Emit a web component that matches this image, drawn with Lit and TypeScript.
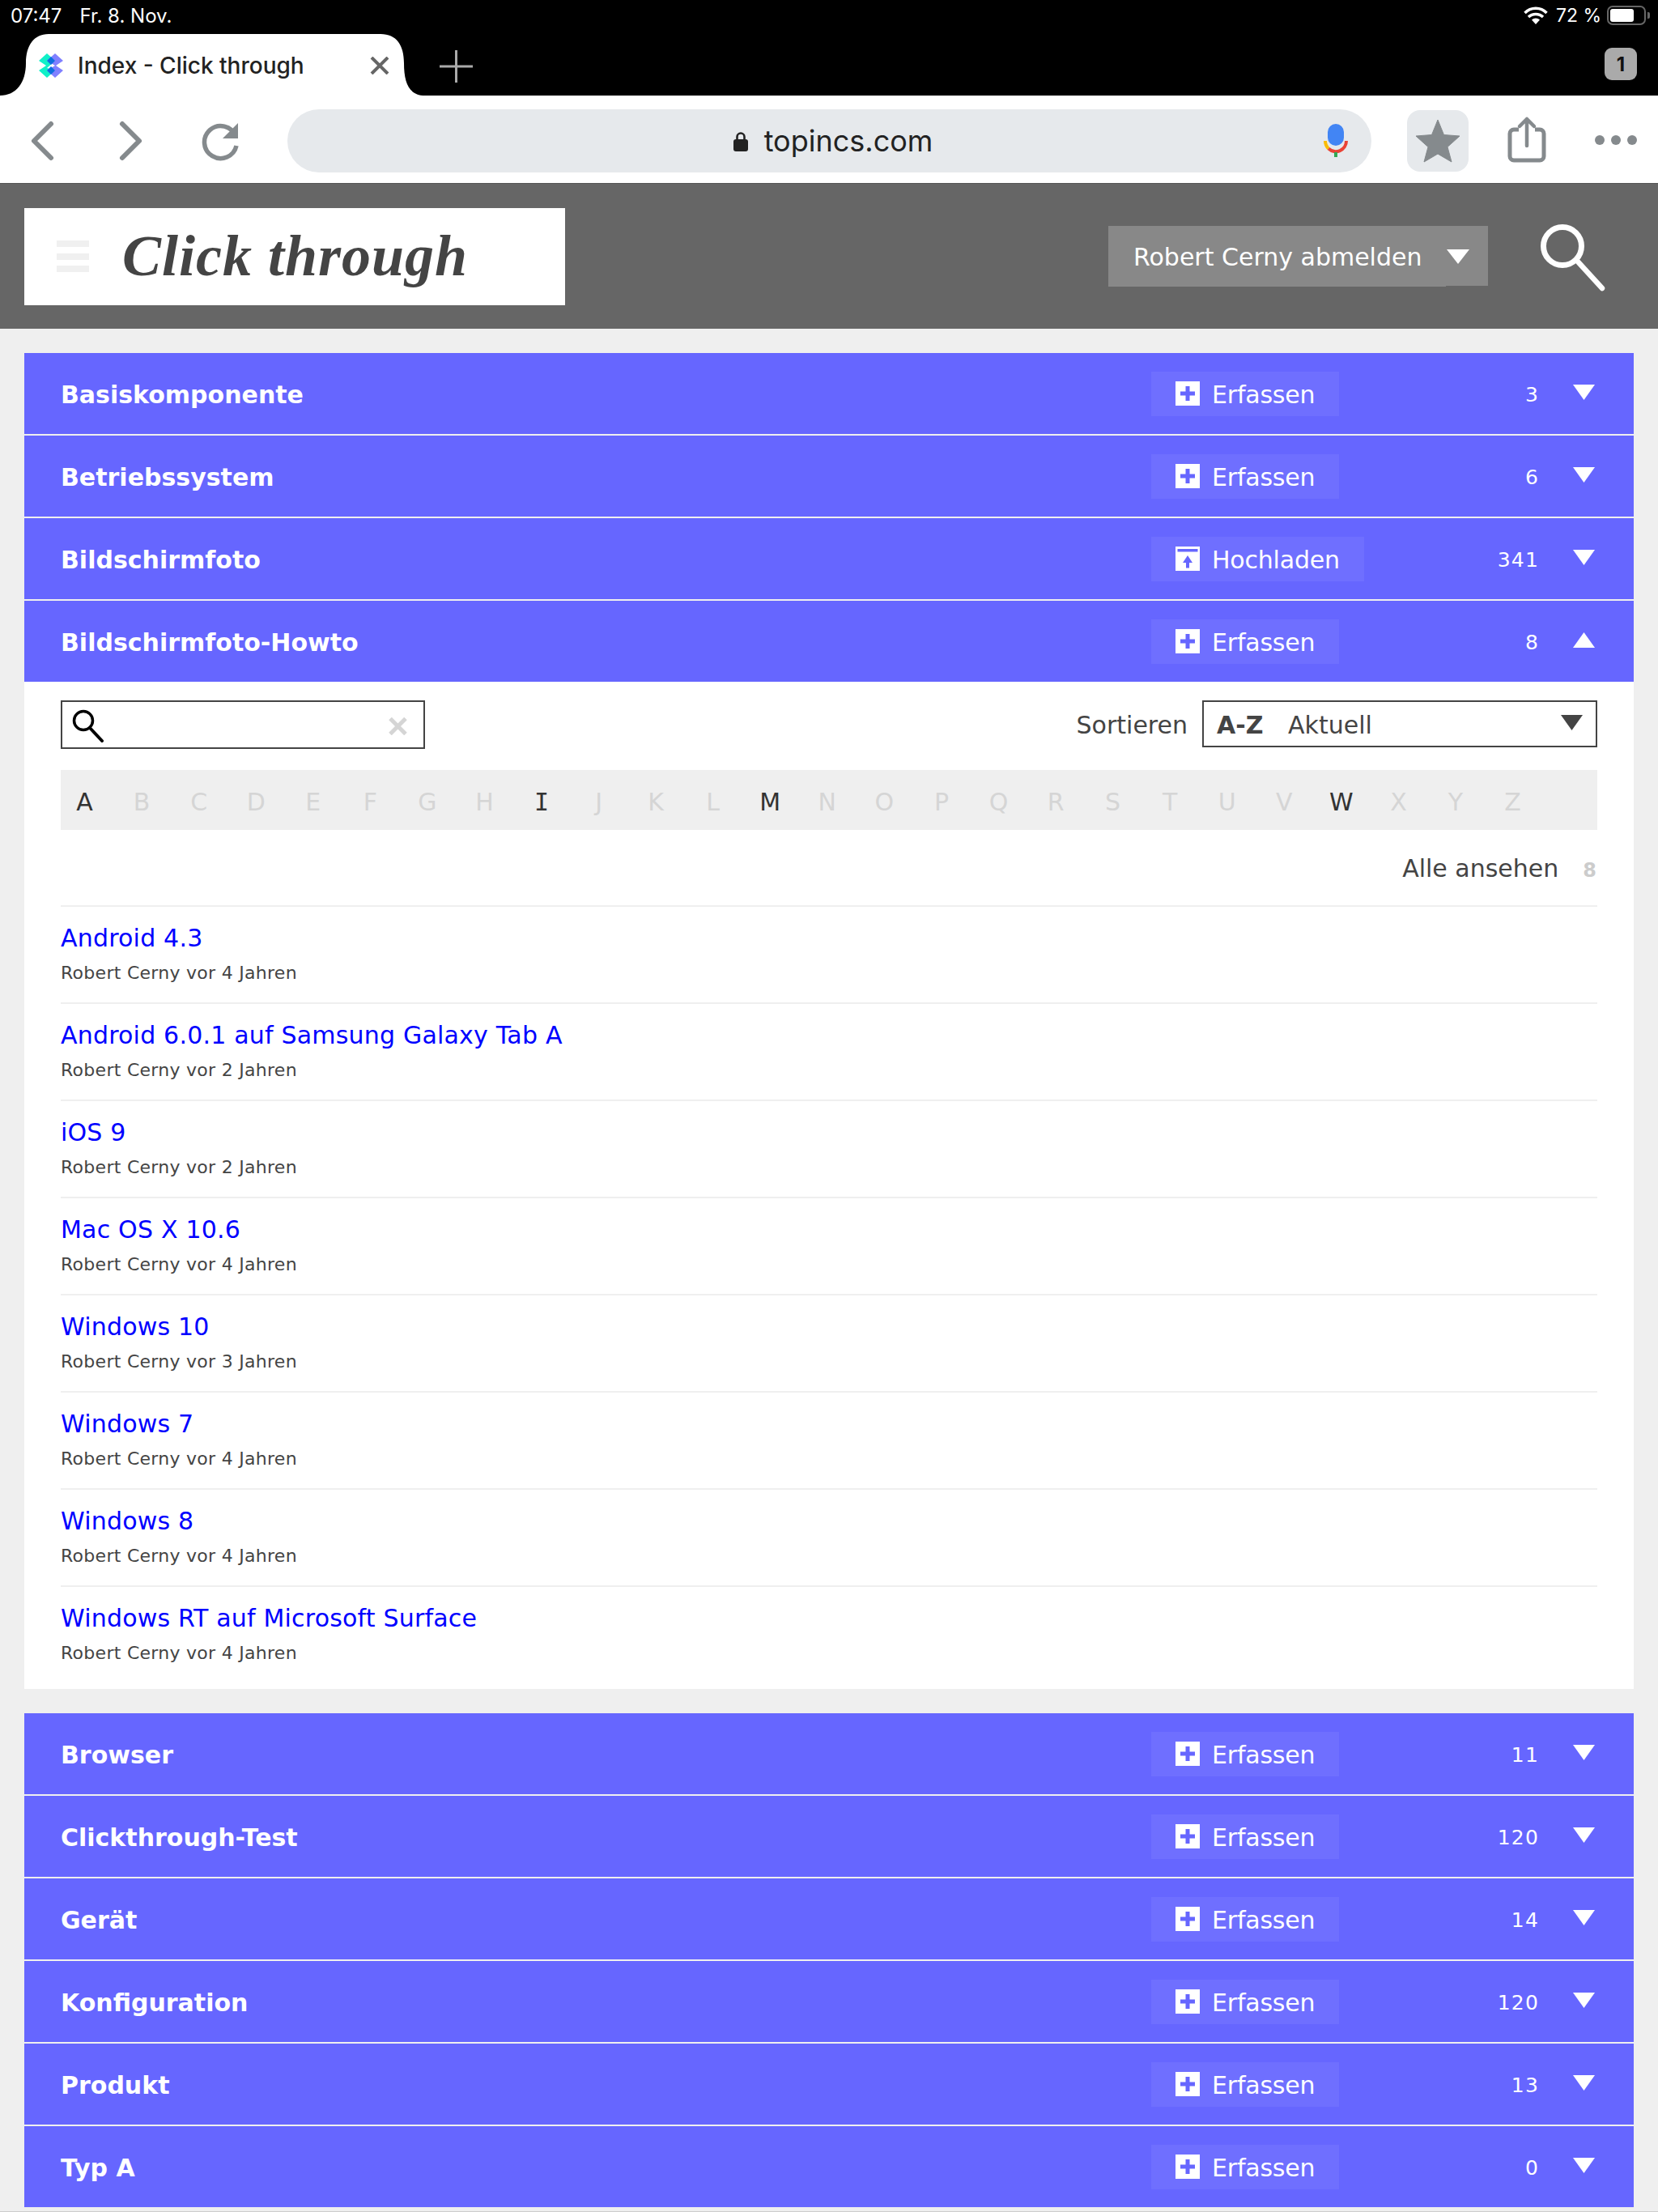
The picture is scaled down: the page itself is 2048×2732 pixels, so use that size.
import { LitElement, html, css } from "lit";
import { customElement } from "lit/decorators.js";
import { classMap } from "lit/directives/class-map.js";

const A = "A B C D E F G H I J K L M N O P Q R S T U V W X Y Z".split(" ");
const ACTIVE = new Set(["A", "I", "M", "W"]);
const ITEMS: [string, string][] = [
  ["Android 4.3", "Robert Cerny vor 4 Jahren"],
  ["Android 6.0.1 auf Samsung Galaxy Tab A", "Robert Cerny vor 2 Jahren"],
  ["iOS 9", "Robert Cerny vor 2 Jahren"],
  ["Mac OS X 10.6", "Robert Cerny vor 4 Jahren"],
  ["Windows 10", "Robert Cerny vor 3 Jahren"],
  ["Windows 7", "Robert Cerny vor 4 Jahren"],
  ["Windows 8", "Robert Cerny vor 4 Jahren"],
  ["Windows RT auf Microsoft Surface", "Robert Cerny vor 4 Jahren"],
];

@customElement("app-root")
export class AppRoot extends LitElement {
  static styles = css`
    :host { display: block; width: 2048px; height: 2732px; overflow: hidden; background: #efefef; font-family: "DejaVu Sans", sans-serif; color: #444; position: relative; }
    svg { display: block; flex: none; }

    .status { height: 42px; background: #000; color: #fff; display: flex; align-items: center; font: 400 24px Inter, sans-serif; padding: 0 10px 4px 13px; box-sizing: border-box; }
    .date { margin-left: 22px; }
    .status-right { margin-left: auto; display: flex; align-items: center; }
    .pct { margin: 0 7px 0 10px; font-size: 23px; }
    .battery { width: 48px; height: 24px; box-sizing: border-box; border: 2px solid #666; border-radius: 7px; padding: 2px; }
    .battery i { display: block; width: 29px; height: 16px; background: #fff; border-radius: 3px; }
    .nub { width: 3px; height: 8px; background: #666; margin-left: 2px; border-radius: 0 2px 2px 0; }

    .strip { height: 76px; background: #000; display: flex; align-items: flex-start; }
    .tab { position: relative; width: 525px; height: 76px; flex: none; display: flex; align-items: center; padding: 2px 0 0 48px; box-sizing: border-box; color: #222; font: 500 28px Inter, sans-serif; }
    .tab-shape { position: absolute; left: 0; top: 0; }
    .tab > :not(.tab-shape) { position: relative; }
    .tab-title { margin-left: 18px; width: 361px; white-space: nowrap; }
    .plus { margin: 20px 0 0 18px; }
    .count-badge { margin: 17px 26px 0 auto; width: 40px; height: 40px; border-radius: 9px; background: #aaa; color: #111; display: flex; align-items: center; justify-content: center; font: 700 24px Inter, sans-serif; }

    .toolbar { height: 108px; background: #fff; display: flex; align-items: flex-start; border-bottom: 1px solid #555; }
    .url { margin: 17px 0 0 25px; width: 1339px; height: 78px; border-radius: 39px; background: #e6e9ec; display: grid; grid-template-columns: 1fr auto 1fr; align-items: center; padding: 0 24px 0 33px; box-sizing: border-box; font: 400 36px Inter, sans-serif; color: #222; }
    .host-name { grid-column: 2; display: flex; align-items: center; gap: 20px; }
    .mic { justify-self: end; }
    .star { margin: 18px 0 0 44px; width: 76px; height: 76px; border-radius: 16px; background: #e6e9ec; display: flex; align-items: center; justify-content: center; }

    .header { height: 179px; background: #666; display: flex; align-items: center; padding: 0 58px 0 30px; }
    .logo { width: 668px; height: 120px; background: #fff; display: flex; align-items: center; padding-left: 40px; box-sizing: border-box; }
    .burger { width: 40px; display: grid; gap: 7.5px; }
    .burger i { display: block; height: 8px; background: #f0f0f0; }
    .logo-text { margin-left: 41px; font: italic 700 72px "Liberation Serif", serif; letter-spacing: 1px; color: #444; white-space: nowrap; }
    .user { margin-left: auto; display: flex; align-items: flex-start; }
    .user-name { width: 417px; height: 75px; background: #888; color: #fff; font-size: 30px; line-height: 78px; padding-left: 31px; box-sizing: border-box; white-space: nowrap; }
    .user-arrow { width: 52px; height: 74px; background: #888; padding: 29px 0 0 1px; box-sizing: border-box; }
    .big-search { margin-left: 52px; }

    .main { padding: 30px 30px 0; display: flex; flex-direction: column; }
    .row { height: 100px; background: #66f; margin-bottom: 2px; display: grid; grid-template-columns: 1347px 1fr auto 27px; align-items: center; padding: 0 48px 0 45px; box-sizing: border-box; color: #fff; }
    .row-title { font-size: 30px; font-weight: 700; padding-top: 3px; }
    .btn { justify-self: start; height: 55px; background: #6f6fff; display: flex; align-items: center; gap: 15px; padding: 0 30px; font-size: 30px; letter-spacing: -0.2px; }
    .btn span { padding-top: 3px; }
    .num { font-size: 25px; letter-spacing: 1.2px; margin-right: 42px; padding-top: 3px; }
    .arrow { margin-bottom: 3px; }

    .panel { background: #fff; height: 1244px; margin: -2px 0 30px; padding: 23px 45px 0; box-sizing: border-box; }
    .tools { display: flex; justify-content: space-between; align-items: flex-start; }
    .search { width: 450px; height: 60px; border: 2px solid #444; box-sizing: border-box; padding: 9px 20px 0 12px; display: flex; align-items: flex-start; justify-content: space-between; }
    .clear { margin-top: 10px; }
    .sort { display: flex; align-items: center; gap: 18px; font-size: 30px; }
    .sort-label { padding-top: 3px; }
    .select { width: 488px; height: 58px; border: 2px solid #444; box-sizing: border-box; display: flex; align-items: center; padding: 3px 16px 0 16px; }
    .select b { width: 88px; }
    .select svg { margin-left: auto; margin-top: -3px; }
    .alpha { margin-top: 26px; height: 74px; background: #efefef; display: flex; align-items: center; padding: 4px 0 0 9.5px; box-sizing: border-box; font-size: 30px; color: #d5d5d5; }
    .alpha span { width: 40px; margin-right: 30.57px; text-align: center; flex: none; }
    .alpha .on { color: #333; }
    .alpha .serif-i { font-family: "DejaVu Sans Mono", monospace; }
    .all { height: 93px; box-sizing: border-box; padding-top: 27.5px; display: flex; justify-content: flex-end; align-items: baseline; font-size: 30px; line-height: 40px; }
    .all b { font-size: 24px; color: #ccc; margin-left: 30px; margin-right: 1px; }
    .item { height: 120px; border-top: 2px solid #efefef; box-sizing: border-box; padding-top: 18.5px; }
    .item a { display: block; font-size: 30px; line-height: 40px; color: #00f; text-decoration: none; letter-spacing: 0.2px; white-space: nowrap; }
    .item small { display: block; margin-top: 8px; font-size: 22px; line-height: 30px; color: #444; letter-spacing: 0.28px; }
    .foot { position: absolute; left: 0; right: 0; bottom: 0; height: 1px; background: #ccc; }
  `;

  private tri(up = false, fill = "#fff") {
    return html`<svg class="arrow" width="27" height="19" viewBox="0 0 27 19"><polygon points=${up ? "0,19 27,19 13.5,0" : "0,0 27,0 13.5,19"} fill=${fill}></polygon></svg>`;
  }

  private plusIcon() {
    return html`<svg width="30" height="30" viewBox="0 0 30 30"><rect width="30" height="30" fill="#fff"></rect><path d="M6 15H24M15 6V24" stroke="#66f" stroke-width="5" fill="none"></path></svg>`;
  }

  private uploadIcon() {
    return html`<svg width="30" height="30" viewBox="0 0 30 30"><rect width="30" height="30" fill="#fff"></rect><rect x="2.5" y="3" width="25" height="3.5" fill="#66f"></rect><polygon points="15,11 21,20 9,20" fill="#66f"></polygon><rect x="13" y="19" width="4" height="7.5" fill="#66f"></rect></svg>`;
  }

  private row(title: string, n: string, open = false, upload = false) {
    return html`<div class="row">
      <div class="row-title">${title}</div>
      <div class="btn">${upload ? this.uploadIcon() : this.plusIcon()}<span>${upload ? "Hochladen" : "Erfassen"}</span></div>
      <div class="num">${n}</div>
      ${this.tri(open)}
    </div>`;
  }

  render() {
    return html`
      <div class="status">
        <span>07:47</span><span class="date">Fr. 8. Nov.</span>
        <div class="status-right">
          <svg width="30" height="24" viewBox="0 0 30 24"><path d="M1.5 9A19 19 0 0 1 28.5 9M6 14A13 13 0 0 1 24 14" stroke="#fff" stroke-width="3.5" fill="none"></path><path d="M10 17.5A7 7 0 0 1 20 17.5L15 23Z" fill="#fff"></path></svg>
          <span class="pct">72 %</span>
          <div class="battery"><i></i></div><div class="nub"></div>
        </div>
      </div>

      <div class="strip">
        <div class="tab">
          <svg class="tab-shape" width="525" height="76" viewBox="0 0 525 76"><path d="M0 76C20 76 32 60 32 36C32 14 42 0 60 0H470C490 0 499 14 499 36C499 60 505 76 525 76Z" fill="#fff"></path></svg>
          <svg width="30" height="30" viewBox="0 0 30 30">
            <path d="M10 0L20 9 10 18 20 21 10 30 0 21 9 15 0 9Z" fill="#10f0c8"></path>
            <path d="M20 0L30 9 21 15 30 21 20 30 10 21 20 15 10 9Z" fill="#8080ff"></path>
            <path d="M15 4L20 9 15 14 10 9ZM15 16L20 21 15 26 10 21Z" fill="#0d6fe0"></path>
          </svg>
          <span class="tab-title">Index - Click through</span>
          <svg width="24" height="22" viewBox="0 0 24 22"><path d="M2 1L22 21M22 1L2 21" stroke="#666" stroke-width="4" fill="none"></path></svg>
        </div>
        <svg class="plus" width="41" height="40" viewBox="0 0 41 40"><path d="M0 20H41M20.5 0V40" stroke="#aaa" stroke-width="3" fill="none"></path></svg>
        <div class="count-badge">1</div>
      </div>

      <div class="toolbar">
        <svg width="330" height="108" viewBox="0 0 330 108" fill="none" stroke="#858a8d" stroke-linecap="round" stroke-linejoin="round">
          <path d="M63 35L42 56L63 77" stroke-width="6"></path>
          <path d="M151 35L172 56L151 77" stroke-width="6"></path>
          <path d="M291 50A20 20 0 1 0 292 62" stroke-width="5.5" stroke-linecap="butt"></path>
          <polygon points="294,34 294,53 275,53" fill="#858a8d" stroke="none"></polygon>
        </svg>
        <div class="url">
          <div class="host-name">
            <svg width="18" height="25" viewBox="0 0 18 25"><path d="M4.5 11V7A4.5 4.5 0 0 1 13.5 7V11" stroke="#222" stroke-width="2.6" fill="none"></path><rect y="10" width="18" height="15" rx="3" fill="#222"></rect></svg>
            <span>topincs.com</span>
          </div>
          <svg class="mic" width="40" height="48" viewBox="0 0 40 48">
            <rect x="10" y="3" width="20" height="27" rx="10" fill="#4285f4"></rect>
            <path d="M7 24A13 13 0 0 0 11 33.5" stroke="#fbbc05" stroke-width="4" fill="none"></path>
            <path d="M11 33.5A13 13 0 0 0 33 24" stroke="#ea4335" stroke-width="4" fill="none"></path>
            <rect x="18" y="38" width="4" height="6" fill="#34a853"></rect>
          </svg>
        </div>
        <div class="star">
          <svg width="56" height="54" viewBox="0 0 56 54"><path d="M28 1L35.5 19.5L55 21L40 34.5L45 53L28 43L11 53L16 34.5L1 21L20.5 19.5Z" fill="#858a8d" stroke="#858a8d" stroke-width="1" stroke-linejoin="round"></path></svg>
        </div>
        <svg width="234" height="108" viewBox="0 0 234 108" fill="none">
          <path d="M62 42H56A5 5 0 0 0 51 47V75A5 5 0 0 0 56 80H88A5 5 0 0 0 93 75V47A5 5 0 0 0 88 42H82" stroke="#858a8d" stroke-width="5"></path>
          <path d="M72 62V29M63 38L72 29L81 38" stroke="#858a8d" stroke-width="4.5" stroke-linecap="round" stroke-linejoin="round"></path>
          <circle cx="162" cy="55" r="6" fill="#858a8d"></circle>
          <circle cx="182" cy="55" r="6" fill="#858a8d"></circle>
          <circle cx="202" cy="55" r="6" fill="#858a8d"></circle>
        </svg>
      </div>

      <div class="header">
        <div class="logo">
          <div class="burger"><i></i><i></i><i></i></div>
          <div class="logo-text">Click through</div>
        </div>
        <div class="user">
          <div class="user-name">Robert Cerny abmelden</div>
          <div class="user-arrow"><svg width="28" height="18" viewBox="0 0 28 18"><polygon points="0,0 28,0 14,18" fill="#fff"></polygon></svg></div>
        </div>
        <svg class="big-search" width="100" height="100" viewBox="0 0 100 100" fill="none" stroke="#fff" stroke-linecap="round"><circle cx="40" cy="37" r="23.5" stroke-width="7"></circle><path d="M57 54L89 89" stroke-width="6.5"></path></svg>
      </div>

      <div class="main">
        ${this.row("Basiskomponente", "3")}
        ${this.row("Betriebssystem", "6")}
        ${this.row("Bildschirmfoto", "341", false, true)}
        ${this.row("Bildschirmfoto-Howto", "8", true)}
        <div class="panel">
          <div class="tools">
            <div class="search">
              <svg width="40" height="41" viewBox="0 0 40 41" fill="none" stroke="#000"><circle cx="14" cy="14" r="11.5" stroke-width="3.5"></circle><path d="M22 23L37 39" stroke-width="4" stroke-linecap="round"></path></svg>
              <svg class="clear" width="23" height="22" viewBox="0 0 23 22"><path d="M2 1.5L21 20.5M21 1.5L2 20.5" stroke="#d5d5d5" stroke-width="5" fill="none"></path></svg>
            </div>
            <div class="sort">
              <span class="sort-label">Sortieren</span>
              <div class="select"><b>A-Z</b><span>Aktuell</span>${this.tri(false, "#444")}</div>
            </div>
          </div>
          <div class="alpha">${A.map((l) => html`<span class=${classMap({ on: ACTIVE.has(l), "serif-i": l === "I" })}>${l}</span>`)}</div>
          <div class="all"><span>Alle ansehen</span><b>8</b></div>
          ${ITEMS.map(([t, s]) => html`<div class="item"><a href="#">${t}</a><small>${s}</small></div>`)}
        </div>
        ${this.row("Browser", "11")}
        ${this.row("Clickthrough-Test", "120")}
        ${this.row("Gerät", "14")}
        ${this.row("Konfiguration", "120")}
        ${this.row("Produkt", "13")}
        ${this.row("Typ A", "0")}
      </div>
      <div class="foot"></div>
    `;
  }
}
